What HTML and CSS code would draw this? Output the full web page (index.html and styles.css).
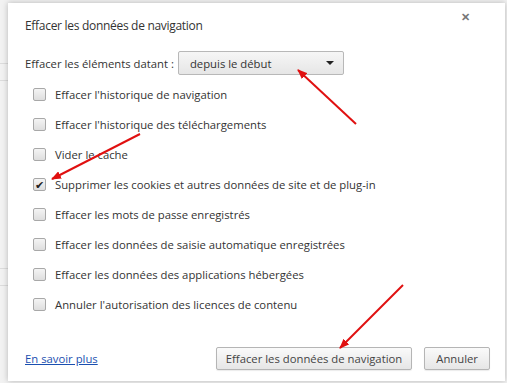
FILE: index.html
```html
<!DOCTYPE html>
<html>
<head>
<meta charset="utf-8">
<link rel="stylesheet" href="styles.css">
</head>
<body>
<div class="backdrop">
    <div class="ghost ghost-top"></div>
    <div class="ghost ghost-bottom"></div>
</div>
<div class="dialog">
    <div class="close">&#x2715;</div>
    <h1 class="title">Effacer les données de navigation</h1>
    <div class="period">
        <span>Effacer les éléments datant :</span>
        <div class="select">
            <span>depuis le début</span>
            <span class="caret"></span>
        </div>
    </div>
    <ul class="options">
        <li><span class="box"></span>Effacer l'historique de navigation</li>
        <li><span class="box"></span>Effacer l'historique des téléchargements</li>
        <li><span class="box"></span>Vider le cache</li>
        <li><span class="box checked">&#x2714;</span>Supprimer les cookies et autres données de site et de plug-in</li>
        <li><span class="box"></span>Effacer les mots de passe enregistrés</li>
        <li><span class="box"></span>Effacer les données de saisie automatique enregistrées</li>
        <li><span class="box"></span>Effacer les données des applications hébergées</li>
        <li><span class="box"></span>Annuler l'autorisation des licences de contenu</li>
    </ul>
    <div class="footer">
        <a href="#" class="more">En savoir plus</a>
        <button class="btn btn-main">Effacer les données de navigation</button>
        <button class="btn">Annuler</button>
    </div>
</div>
<svg class="arrows" width="507" height="383">
    <defs>
        <marker id="head" markerWidth="10" markerHeight="8" refX="9" refY="4" orient="auto" markerUnits="userSpaceOnUse">
            <path d="M0,0 L10,4 L0,8 Z" fill="#e01010"/>
        </marker>
    </defs>
    <line x1="356" y1="124" x2="298" y2="70" stroke="#e01010" stroke-width="2" marker-end="url(#head)"/>
    <line x1="140" y1="134" x2="52" y2="179" stroke="#e01010" stroke-width="2" marker-end="url(#head)"/>
    <line x1="403" y1="285" x2="340" y2="348" stroke="#e01010" stroke-width="2" marker-end="url(#head)"/>
</svg>
</body>
</html>
```
FILE: styles.css
```css
html, body {
    margin: 0;
    padding: 0;
    width: 507px;
    height: 383px;
    overflow: hidden;
}

body {
    position: relative;
    background: #f2f2f2;
    font-family: "Open Sans", "Noto Sans", sans-serif;
    font-size: 11.3px;
    color: #333;
}

.backdrop {
    position: absolute;
    inset: 0;
}

.ghost {
    position: absolute;
    left: 0;
    width: 8px;
    height: 16px;
    border-top: 1px solid #dcdcdc;
    border-bottom: 1px solid #dcdcdc;
}

.ghost-top {
    top: 63px;
}

.ghost-bottom {
    top: 268px;
}

.dialog {
    position: absolute;
    left: 8px;
    top: 3px;
    right: 2px;
    bottom: 2px;
    background: #fff;
    box-shadow: 0 0 6px rgba(0, 0, 0, 0.25);
    padding: 0 15px 0 17px;
    display: flex;
    flex-direction: column;
}

.close {
    position: absolute;
    right: 35px;
    top: 6px;
    font-size: 11px;
    font-weight: bold;
    color: #777;
}

.title {
    margin: 13px 0 0;
    font-size: 12px;
    letter-spacing: -0.3px;
    font-weight: normal;
    color: #333;
    line-height: 20px;
}

.period {
    display: flex;
    align-items: center;
    gap: 4px;
    margin-top: 15px;
}

.select {
    width: 166px;
    height: 24px;
    box-sizing: border-box;
    border: 1px solid #b8b8b8;
    border-radius: 2px;
    background: linear-gradient(#f6f6f6, #e6e6e6);
    display: flex;
    align-items: center;
    justify-content: space-between;
    padding: 0 9px 0 11px;
}

.caret {
    width: 0;
    height: 0;
    border-left: 4px solid transparent;
    border-right: 4px solid transparent;
    border-top: 4px solid #222;
}

.options {
    list-style: none;
    margin: 4px 0 0;
    padding: 0 0 0 8px;
}

.options li {
    display: flex;
    align-items: center;
    height: 30px;
}

.box {
    width: 13px;
    height: 13px;
    box-sizing: border-box;
    border: 1px solid #a8a8a8;
    border-radius: 2px;
    background: linear-gradient(#f4f4f4, #dedede);
    margin-right: 9px;
    display: flex;
    align-items: center;
    justify-content: center;
    font-size: 11px;
    line-height: 1;
    color: #222;
}

.footer {
    display: flex;
    align-items: center;
    margin-top: 28px;
    gap: 12px;
}

.more {
    color: #1a4fb0;
    text-decoration: underline;
    margin-right: auto;
}

.btn {
    font-family: inherit;
    font-size: 11.3px;
    color: #444;
    height: 23px;
    border: 1px solid #b5b5b5;
    border-radius: 2px;
    background: linear-gradient(#fafafa, #e6e6e6);
    padding: 0 11px;
    box-shadow: 0 1px 1px rgba(0, 0, 0, 0.08);
}

.btn-main {
    padding: 0 9px;
}

.arrows {
    position: absolute;
    left: 0;
    top: 0;
}
```
